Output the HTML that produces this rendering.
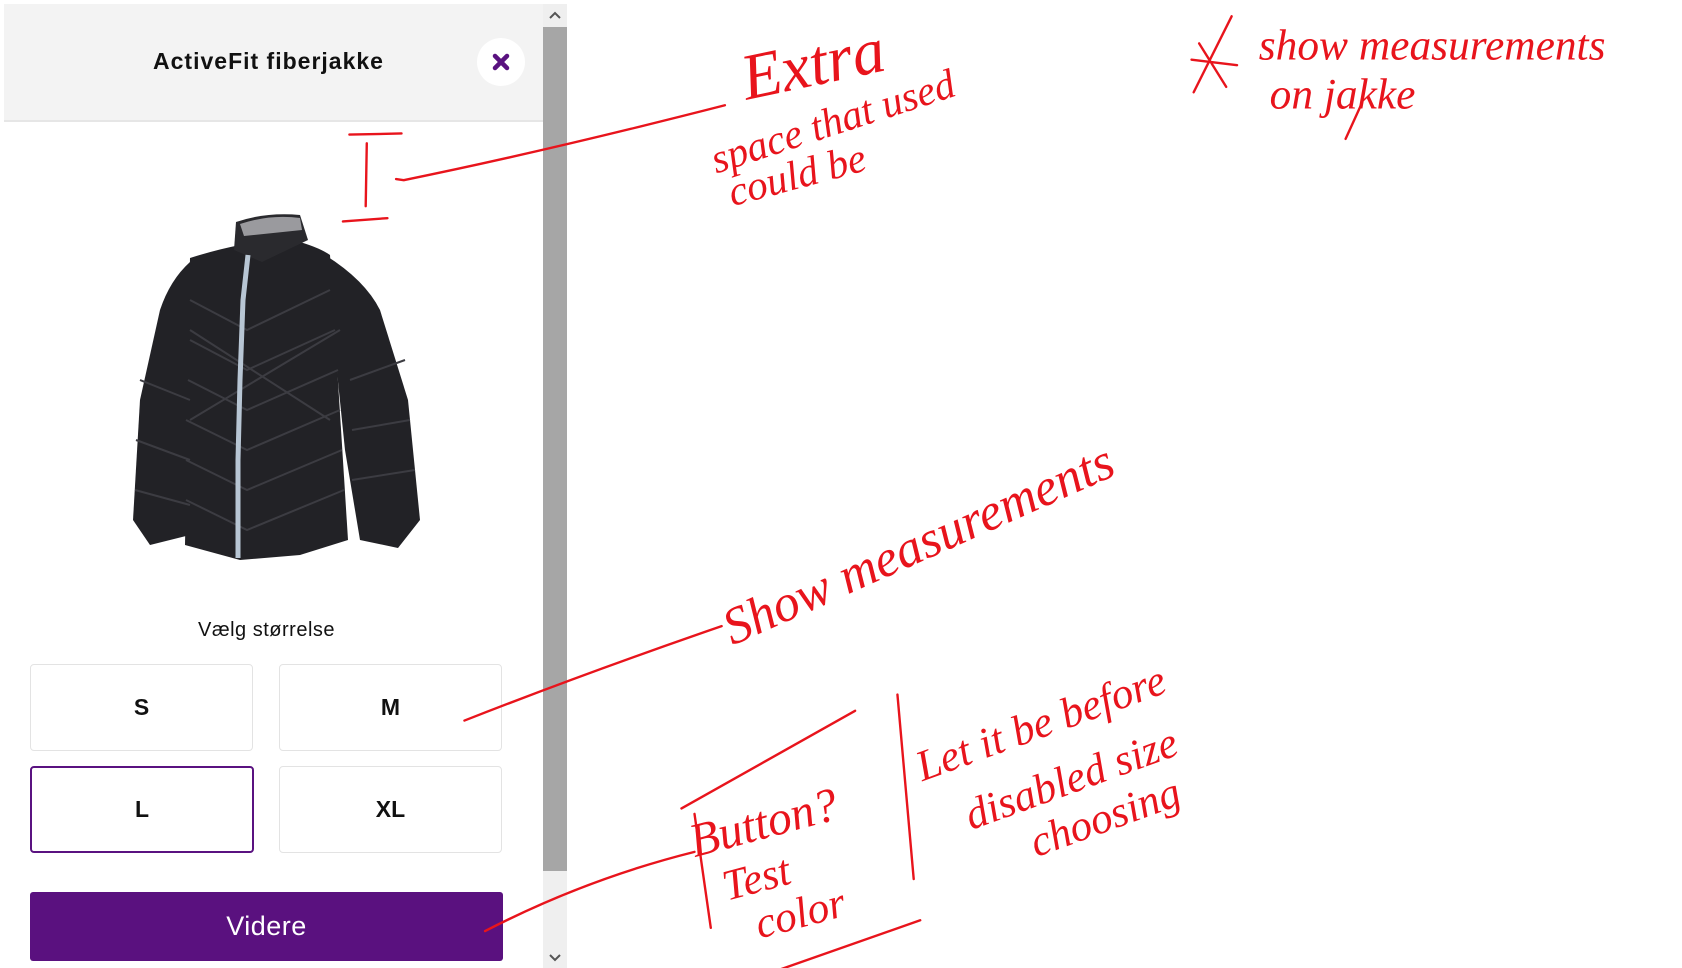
<!DOCTYPE html>
<html><head><meta charset="utf-8"><style>
*{margin:0;padding:0;box-sizing:border-box}
body{width:1682px;height:968px;background:#fff;position:relative;overflow:hidden;font-family:"Liberation Sans",sans-serif}
.hdr{position:absolute;left:4px;top:4px;width:539px;height:118px;background:#f3f3f3;border-bottom:2px solid #e6e6e6}
.title{position:absolute;left:0;width:539px;top:44px;text-align:center;font-weight:bold;font-size:23px;color:#111;letter-spacing:1px;padding-right:10px}
.close{position:absolute;left:473px;top:34px;width:48px;height:48px;border-radius:50%;background:#fff}
.sb{position:absolute;left:543px;top:4px;width:24px;height:964px;background:#efefef}
.thumb{position:absolute;left:0;top:23px;width:24px;height:844px;background:#a6a6a6}
.lbl{position:absolute;left:30px;width:473px;top:619px;text-align:center;font-size:20px;color:#111;letter-spacing:0.5px}
.box{position:absolute;width:223px;height:87px;border:1px solid #e3e3e3;border-radius:4px;background:#fff;text-align:center;line-height:85px;font-weight:bold;font-size:23px;color:#111}
.sel{border:2px solid #5a1280;line-height:83px}
.btn{position:absolute;left:30px;top:892px;width:473px;height:69px;background:#5a117f;border-radius:3px;color:#fff;text-align:center;line-height:69px;font-size:27px;letter-spacing:0.5px}
</style></head><body>
<div class="hdr"><div class="title">ActiveFit fiberjakke</div>
<div class="close"><svg width="48" height="48" viewBox="0 0 48 48"><path d="M18 18L30 30M30 18L18 30" stroke="#5a1280" stroke-width="4.5" stroke-linecap="round"/></svg></div></div>
<div class="sb"><div class="thumb"></div>
<svg style="position:absolute;left:6px;top:7px" width="12" height="8"><path d="M1 7L6 2L11 7" stroke="#555" stroke-width="2" fill="none"/></svg>
<svg style="position:absolute;left:6px;top:950px" width="12" height="8"><path d="M1 1L6 6L11 1" stroke="#555" stroke-width="2" fill="none"/></svg></div>

<svg style="position:absolute;left:0;top:0" width="560" height="600">
<g fill="#222226">
<path d="M190 262Q170 280 160 310L140 400L133 520L150 545L190 535L195 420Z"/>
<path d="M325 255Q365 280 380 310L408 400L420 520L398 548L360 540L345 450Z"/>
<path d="M190 258Q215 250 240 245L300 242Q320 248 330 255L348 540L300 555L240 560L185 545Z"/>
<path d="M236 222Q265 212 300 215L308 240L262 262L234 250Z" fill="#2a2a2e"/>
<path d="M240 224Q270 214 300 218L302 230L244 236Z" fill="#9a9a9e"/>
</g>
<g stroke="#3c3c42" stroke-width="2" fill="none">
<path d="M190 300L247 330L330 290M190 340L247 370L335 330M188 380L247 410L338 370M186 420L247 450L340 410M186 460L247 490L342 450M186 500L247 530L344 490M190 330L330 420M190 420L340 330"/>
<path d="M140 380L190 400M136 440L190 460M135 490L190 505M350 380L405 360M352 430L410 420M352 480L415 470"/>
</g>
<path d="M248 255L243 300L240 380L238 460L238 558" stroke="#b8c6d4" stroke-width="5" fill="none"/>
</svg>

<div class="lbl">Vælg størrelse</div>
<div class="box" style="left:30px;top:664px">S</div>
<div class="box" style="left:279px;top:664px">M</div>
<div class="box sel" style="left:30px;top:766px;width:224px">L</div>
<div class="box" style="left:279px;top:766px">XL</div>
<div class="btn">Videre</div>

<svg style="position:absolute;left:0;top:0" width="1682" height="968" viewBox="0 0 1550 892">
<g stroke="#e8141c" stroke-width="2.2" fill="none" stroke-linecap="round">
<path d="M322 124L370 123M338 132L337 190M316 204L357 201"/>
<path d="M365 165L372 166Q500 140 668 97"/>
<path d="M428 664Q540 620 665 577"/>
<path d="M447 858Q540 810 640 785"/>
<path d="M628 745L788 655M655 855L640 750M827 640L842 810M700 900L848 848M1240 128L1255 95"/>
<path d="M1100 85L1135 15M1098 55L1140 60M1105 40L1130 80"/>
</g>
<g fill="#e8141c" font-family="Liberation Serif,serif" font-style="italic">
<text x="688" y="92" font-size="60" transform="rotate(-12 688 92)">Extra</text>
<text x="660" y="160" font-size="38" transform="rotate(-18 660 160)">space that used</text>
<text x="675" y="190" font-size="38" transform="rotate(-15 675 190)">could be</text>
<text x="1160" y="55" font-size="40">show measurements</text>
<text x="1170" y="100" font-size="40">on jakke</text>
<text x="675" y="595" font-size="48" transform="rotate(-24 675 595)">Show measurements</text>
<text x="640" y="790" font-size="44" transform="rotate(-15 640 790)">Button?</text>
<text x="670" y="830" font-size="40" transform="rotate(-15 670 830)">Test</text>
<text x="700" y="865" font-size="40" transform="rotate(-15 700 865)">color</text>
<text x="850" y="720" font-size="40" transform="rotate(-20 850 720)">Let it be before</text>
<text x="895" y="765" font-size="40" transform="rotate(-20 895 765)">disabled size</text>
<text x="955" y="790" font-size="40" transform="rotate(-20 955 790)">choosing</text>
</g>
</svg>
</body></html>
